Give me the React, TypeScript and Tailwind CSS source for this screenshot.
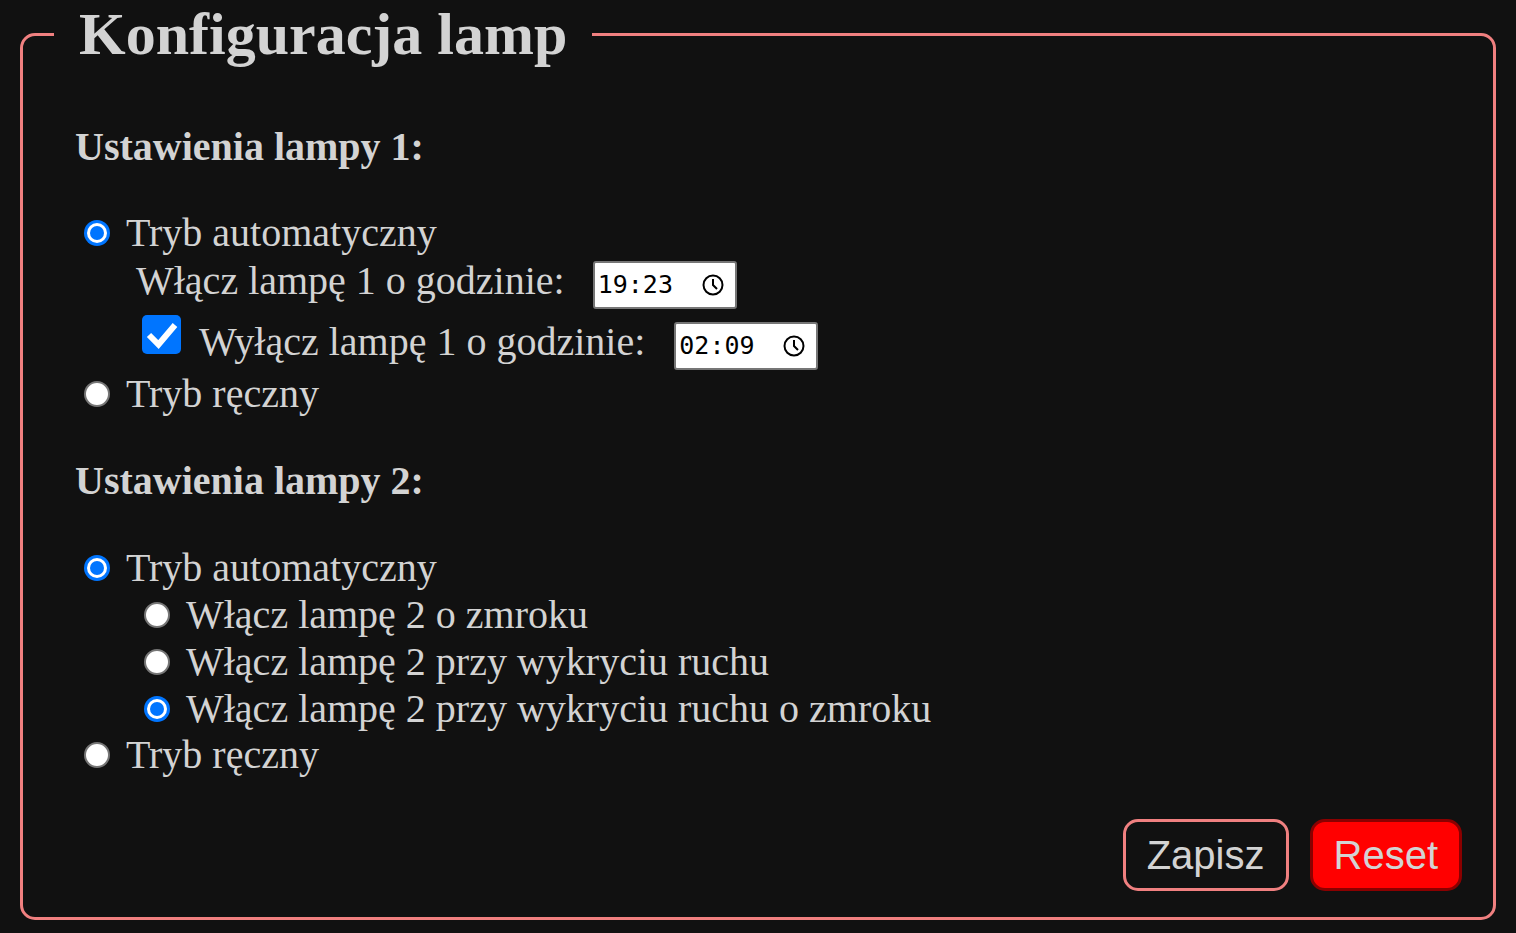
import React from "react";

function Radio({ checked }: { checked?: boolean }) {
  if (checked) {
    return (
      <span className="flex h-[26px] w-[26px] shrink-0 items-center justify-center rounded-full bg-[#0075ff]">
        <span className="flex h-[20px] w-[20px] items-center justify-center rounded-full bg-white">
          <span className="h-[14px] w-[14px] rounded-full bg-[#0075ff]" />
        </span>
      </span>
    );
  }
  return <span className="block h-[26px] w-[26px] shrink-0 rounded-full border-2 border-[#767676] bg-white" />;
}

function Checkbox() {
  return (
    <span className="flex h-[39px] w-[39px] shrink-0 items-center justify-center rounded-[5px] bg-[#0075ff]">
      <svg width="39" height="39" viewBox="0 0 39 39">
        <path d="M7 20 L16.5 29.5 L33 10" fill="none" stroke="white" strokeWidth="6" />
      </svg>
    </span>
  );
}

function ClockIcon() {
  return (
    <svg width="22" height="22" viewBox="0 0 22 22">
      <circle cx="11" cy="11" r="9.5" fill="none" stroke="black" strokeWidth="2" />
      <path d="M11 5 V11 L15 15" fill="none" stroke="black" strokeWidth="2" />
    </svg>
  );
}

function TimeBox({ value }: { value: string }) {
  return (
    <div className="flex h-[48px] w-[144px] items-center justify-between rounded-[3px] border-2 border-[#767676] bg-white pl-[3px] pr-[11px] font-['DejaVu_Sans_Mono',monospace] text-[25px] text-black">
      <span>{value}</span>
      <ClockIcon />
    </div>
  );
}

function RadioRow({
  label,
  checked,
  indent,
  rowHeight,
}: {
  label: string;
  checked?: boolean;
  indent?: boolean;
  rowHeight: string;
}) {
  return (
    <label className={`flex items-center ${rowHeight} ${indent ? "pl-[67px]" : "pl-[7px]"}`}>
      <Radio checked={checked} />
      <span className="ml-[16px]">{label}</span>
    </label>
  );
}

export default function App() {
  return (
    <div className="min-h-screen bg-[#111111] px-[20px] font-['Liberation_Serif',serif] text-[40px] leading-[46px] text-[#d3d3d3]">
      <fieldset className="rounded-[15px] border-[3px] border-[#f08080] px-[31px] pb-[26px]">
        <legend className="px-[25px] text-[60px] font-bold leading-[69px]">Konfiguracja lamp</legend>

        <div className="pl-[23px]">
          {/* Lampa 1 */}
          <div className="-ml-[2px] mt-[55px] font-bold">Ustawienia lampy 1:</div>

          <div className="mt-[40px]">
            <RadioRow label="Tryb automatyczny" checked rowHeight="h-[46px]" />
          </div>
          <div className="flex h-[60px] items-start pl-[59px]">
            <span className="mt-[2px]">Włącz lampę 1 o godzinie:</span>
            <div className="ml-[28px] mt-[5px]">
              <TimeBox value="19:23" />
            </div>
          </div>
          <div className="flex h-[52px] items-start pl-[65px]">
            <span className="-mt-[1px] flex">
              <Checkbox />
            </span>
            <span className="ml-[18px] mt-[3px]">Wyłącz lampę 1 o godzinie:</span>
            <div className="ml-[29px] mt-[6px]">
              <TimeBox value="02:09" />
            </div>
          </div>
          <label className="flex h-[46px] items-start pl-[7px]">
            <span className="mt-[26px] flex -translate-y-[13px]">
              <Radio />
            </span>
            <span className="ml-[16px] mt-[3px]">Tryb ręczny</span>
          </label>

          {/* Lampa 2 */}
          <div className="-ml-[2px] mt-[44px] font-bold">Ustawienia lampy 2:</div>

          <div className="mt-[40px]">
            <RadioRow label="Tryb automatyczny" checked rowHeight="h-[47px]" />
            <RadioRow label="Włącz lampę 2 o zmroku" indent rowHeight="h-[47px]" />
            <RadioRow label="Włącz lampę 2 przy wykryciu ruchu" indent rowHeight="h-[47px]" />
            <RadioRow label="Włącz lampę 2 przy wykryciu ruchu o zmroku" checked indent rowHeight="h-[47px]" />
            <RadioRow label="Tryb ręczny" rowHeight="h-[46px]" />
          </div>
        </div>

        <div className="mt-[41px] flex justify-end gap-[21px] font-['Liberation_Sans',Arial,sans-serif]">
          <button className="rounded-[15px] border-[3px] border-[#f08080] bg-transparent px-[21px] py-[10px] text-[#d3d3d3]">
            Zapisz
          </button>
          <button className="rounded-[15px] border-[3px] border-[#8b0000] bg-[#ff0000] px-[21px] py-[10px] text-[#d3d3d3]">
            Reset
          </button>
        </div>
      </fieldset>
    </div>
  );
}
